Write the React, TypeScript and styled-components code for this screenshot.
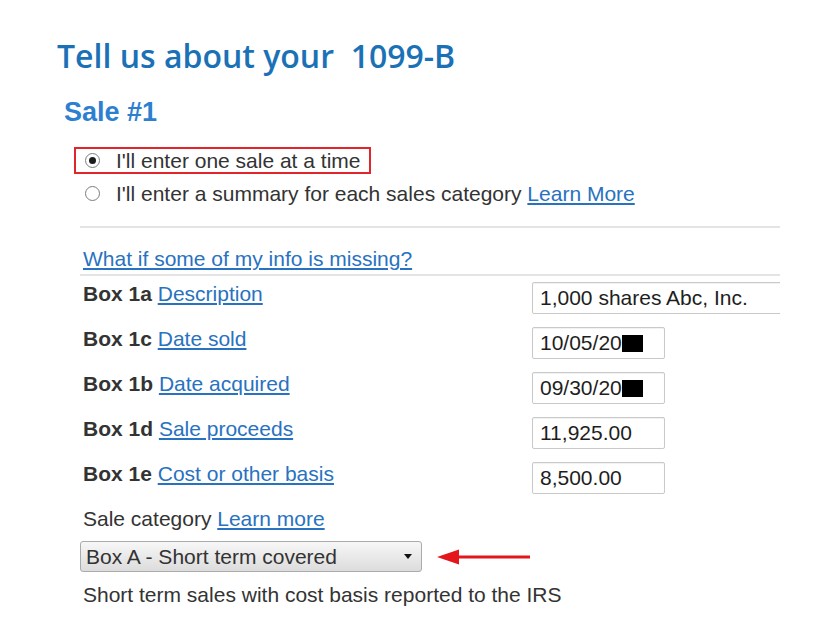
import React from 'react'
import styled, { createGlobalStyle } from 'styled-components'

const GlobalStyle = createGlobalStyle`
  body {
    margin: 0;
    background: #fff;
    font-family: "Liberation Sans", Arial, sans-serif;
  }
`

const Page = styled.div`
  width: 720px;
  padding: 35px 0 0 57px;
  color: #333;
  font-size: 21px;
  line-height: 24px;
`

const Title = styled.h1`
  margin: 0;
  font-family: "Open Sans", Lato, sans-serif;
  font-weight: 600;
  font-size: 32px;
  line-height: 41px;
  color: #1b71b6;
  white-space: pre;
`

const SaleTitle = styled.h2`
  margin: 21px 0 0 7px;
  font-size: 27px;
  line-height: 30px;
  font-weight: 700;
  color: #2d7fd0;
`

const Options = styled.div`
  margin: 20px 0 0 17px;
  display: flex;
  flex-direction: column;
  align-items: flex-start;
  gap: 6px;
`

const Option = styled.label<{ $highlight?: boolean }>`
  display: inline-flex;
  align-items: center;
  gap: 16px;
  height: 27px;
  box-sizing: border-box;
  padding: 0 9px 0 9px;
  border: 2px solid ${p => (p.$highlight ? '#e0252b' : 'transparent')};
  cursor: pointer;
`

const Radio = styled.span<{ $checked?: boolean }>`
  width: 15px;
  height: 15px;
  box-sizing: border-box;
  border-radius: 50%;
  border: 1px solid #7d7d7d;
  background: #fff;
  display: flex;
  align-items: center;
  justify-content: center;
  flex-shrink: 0;

  &::after {
    content: '';
    width: 7px;
    height: 7px;
    border-radius: 50%;
    background: ${p => (p.$checked ? '#1c1c1c' : 'transparent')};
  }
`

const Link = styled.a`
  color: #2872bf;
  text-decoration: underline;
  text-underline-offset: 2px;
  cursor: pointer;
`

const Form = styled.div`
  margin: 19px 0 0 23px;
  width: 700px;
  overflow: hidden;
`

const Divider = styled.div<{ $top: number }>`
  height: 2px;
  margin-top: ${p => p.$top}px;
  background: #e4e4e4;
`

const Text = styled.div<{ $top: number }>`
  margin-top: ${p => p.$top}px;
  padding-left: 3px;
  white-space: nowrap;
`

const Rows = styled.div`
  margin-top: 6px;
  display: flex;
  flex-direction: column;
  gap: 13px;
`

const Row = styled.div`
  display: flex;
  align-items: flex-start;
  height: 32px;
`

const Label = styled.div`
  width: 452px;
  flex-shrink: 0;
  padding-left: 3px;
  box-sizing: border-box;
  white-space: nowrap;

  b {
    color: #333;
  }
`

const Field = styled.div<{ $width: number }>`
  width: ${p => p.$width}px;
  height: 32px;
  flex-shrink: 0;
  box-sizing: border-box;
  border: 1px solid #c9c9c9;
  border-radius: 2px;
  box-shadow: inset 0 1px 1px rgba(0, 0, 0, 0.06);
  padding: 0 7px;
  display: flex;
  align-items: center;
  line-height: 30px;
  color: #1e1e1e;
  white-space: nowrap;
`

const Redact = styled.span`
  display: inline-block;
  width: 21px;
  height: 17px;
  background: #000;
`

const SelectRow = styled.div`
  margin-top: 10px;
  display: flex;
  align-items: center;
  gap: 15px;
`

const Select = styled.div`
  width: 342px;
  height: 31px;
  box-sizing: border-box;
  border: 1px solid #ababab;
  border-radius: 3px;
  background: linear-gradient(#f7f7f7, #dcdcdc);
  padding: 0 9px 0 5px;
  display: flex;
  align-items: center;
  justify-content: space-between;
  color: #333;
`

const Caret = styled.span`
  width: 0;
  height: 0;
  border-left: 4px solid transparent;
  border-right: 4px solid transparent;
  border-top: 5px solid #111;
`

const rows = [
  { box: '1a', label: 'Description', value: '1,000 shares Abc, Inc.', width: 300 },
  { box: '1c', label: 'Date sold', value: '10/05/20', width: 133, redact: true },
  { box: '1b', label: 'Date acquired', value: '09/30/20', width: 133, redact: true },
  { box: '1d', label: 'Sale proceeds', value: '11,925.00', width: 133 },
  { box: '1e', label: 'Cost or other basis', value: '8,500.00', width: 133 },
]

const RedArrow = () => (
  <svg width="93" height="18" viewBox="0 0 93 18">
    <path d="M0 9 L22 1.5 L22 16.5 Z" fill="#e3161c" />
    <rect x="20" y="7.5" width="73" height="3" fill="#e3161c" />
  </svg>
)

export default function App() {
  return (
    <>
      <GlobalStyle />
      <Page>
        <Title>{'Tell us about your  1099-B'}</Title>
        <SaleTitle>Sale #1</SaleTitle>
        <Options>
          <Option $highlight>
            <Radio $checked />
            I'll enter one sale at a time
          </Option>
          <Option>
            <Radio />
            <span>
              I'll enter a summary for each sales category <Link>Learn More</Link>
            </span>
          </Option>
        </Options>
        <Form>
          <Divider $top={0} />
          <Text $top={19}>
            <Link>What if some of my info is missing?</Link>
          </Text>
          <Divider $top={3} />
          <Rows>
            {rows.map(r => (
              <Row key={r.box}>
                <Label>
                  <b>Box {r.box}</b> <Link>{r.label}</Link>
                </Label>
                <Field $width={r.width}>
                  {r.value}
                  {r.redact && <Redact />}
                </Field>
              </Row>
            ))}
          </Rows>
          <Text $top={13}>
            Sale category <Link>Learn more</Link>
          </Text>
          <SelectRow>
            <Select>
              <span>Box A - Short term covered</span>
              <Caret />
            </Select>
            <RedArrow />
          </SelectRow>
          <Text $top={11}>Short term sales with cost basis reported to the IRS</Text>
        </Form>
      </Page>
    </>
  )
}
